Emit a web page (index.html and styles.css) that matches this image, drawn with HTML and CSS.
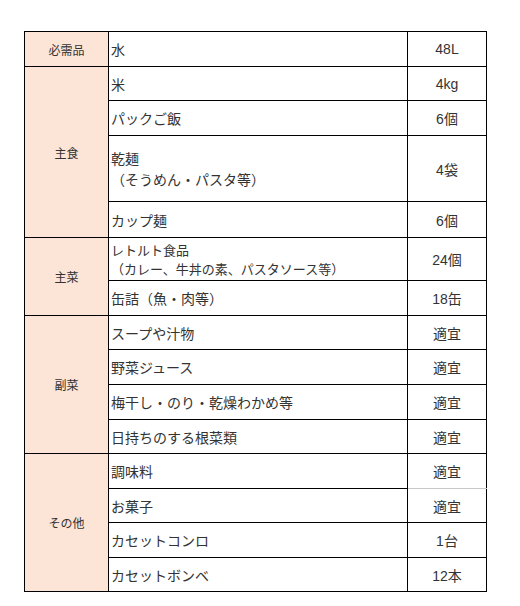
FILE: index.html
```html
<!DOCTYPE html>
<html lang="ja">
<head>
<meta charset="utf-8">
<link rel="stylesheet" href="styles.css">
</head>
<body>
<table class="stock">
  <colgroup><col class="c1"><col class="c2"><col class="c3"></colgroup>
  <tr class="h35"><th>必需品</th><td class="item">水</td><td class="qty">48L</td></tr>
  <tr class="h34"><th rowspan="4">主食</th><td class="item dot-b">米</td><td class="qty dot-b">4kg</td></tr>
  <tr class="h35"><td class="item">パックご飯</td><td class="qty">6個</td></tr>
  <tr class="h66"><td class="item tall dot-b">乾麺<br>（そうめん・パスタ等）</td><td class="qty dot-b">4袋</td></tr>
  <tr class="h36"><td class="item">カップ麺</td><td class="qty">6個</td></tr>
  <tr class="h43"><th rowspan="2">主菜</th><td class="item tight dot-b">レトルト食品<br>（カレー、牛丼の素、パスタソース等）</td><td class="qty dot-b">24個</td></tr>
  <tr class="h35"><td class="item">缶詰（魚・肉等）</td><td class="qty">18缶</td></tr>
  <tr class="h34"><th rowspan="4">副菜</th><td class="item dot-b">スープや汁物</td><td class="qty dot-b">適宜</td></tr>
  <tr class="h35"><td class="item dot-b">野菜ジュース</td><td class="qty dot-b">適宜</td></tr>
  <tr class="h35"><td class="item dot-b">梅干し・のり・乾燥わかめ等</td><td class="qty dot-b">適宜</td></tr>
  <tr class="h34"><td class="item">日持ちのする根菜類</td><td class="qty">適宜</td></tr>
  <tr class="h35"><th rowspan="4">その他</th><td class="item">調味料</td><td class="qty light-b">適宜</td></tr>
  <tr class="h34"><td class="item dot-b">お菓子</td><td class="qty dot-b">適宜</td></tr>
  <tr class="h35"><td class="item">カセットコンロ</td><td class="qty">1台</td></tr>
  <tr class="h34"><td class="item">カセットボンベ</td><td class="qty">12本</td></tr>
</table>
</body>
</html>
```
FILE: styles.css
```css
html, body {
  margin: 0;
  padding: 0;
  background: #ffffff;
}
body {
  font-family: "Noto Sans CJK JP", "Noto Sans", sans-serif;
  color: #333333;
}
.stock {
  border-collapse: collapse;
  margin: 31px 0 0 24px;
  width: 462px;
  table-layout: fixed;
}
.c1 { width: 84px; }
.c2 { width: 299px; }
.c3 { width: 79px; }
.stock th, .stock td {
  border: 1px solid #000000;
  padding: 0;
  vertical-align: middle;
}
.stock th {
  background: #fce4d6;
  font-weight: normal;
  font-size: 12px;
  text-align: center;
}
.item {
  font-size: 14px;
  padding-left: 2px !important;
  text-align: left;
  line-height: 20px;
}
.item.tall { line-height: 21px; }
.item.tight { line-height: 19px; font-size: 13px; }
.qty {
  font-family: "Liberation Sans", "Noto Sans CJK JP", sans-serif;
  font-size: 14px;
  text-align: center;
}
.stock td.dot-b {
  border-bottom: 1px dotted #000000;
}
.stock td.light-b {
  border-bottom: 1px solid #c8c8c8;
}
.h34 { height: 34px; }
.h35 { height: 35px; }
.h36 { height: 36px; }
.h43 { height: 43px; }
.h66 { height: 66px; }
```
